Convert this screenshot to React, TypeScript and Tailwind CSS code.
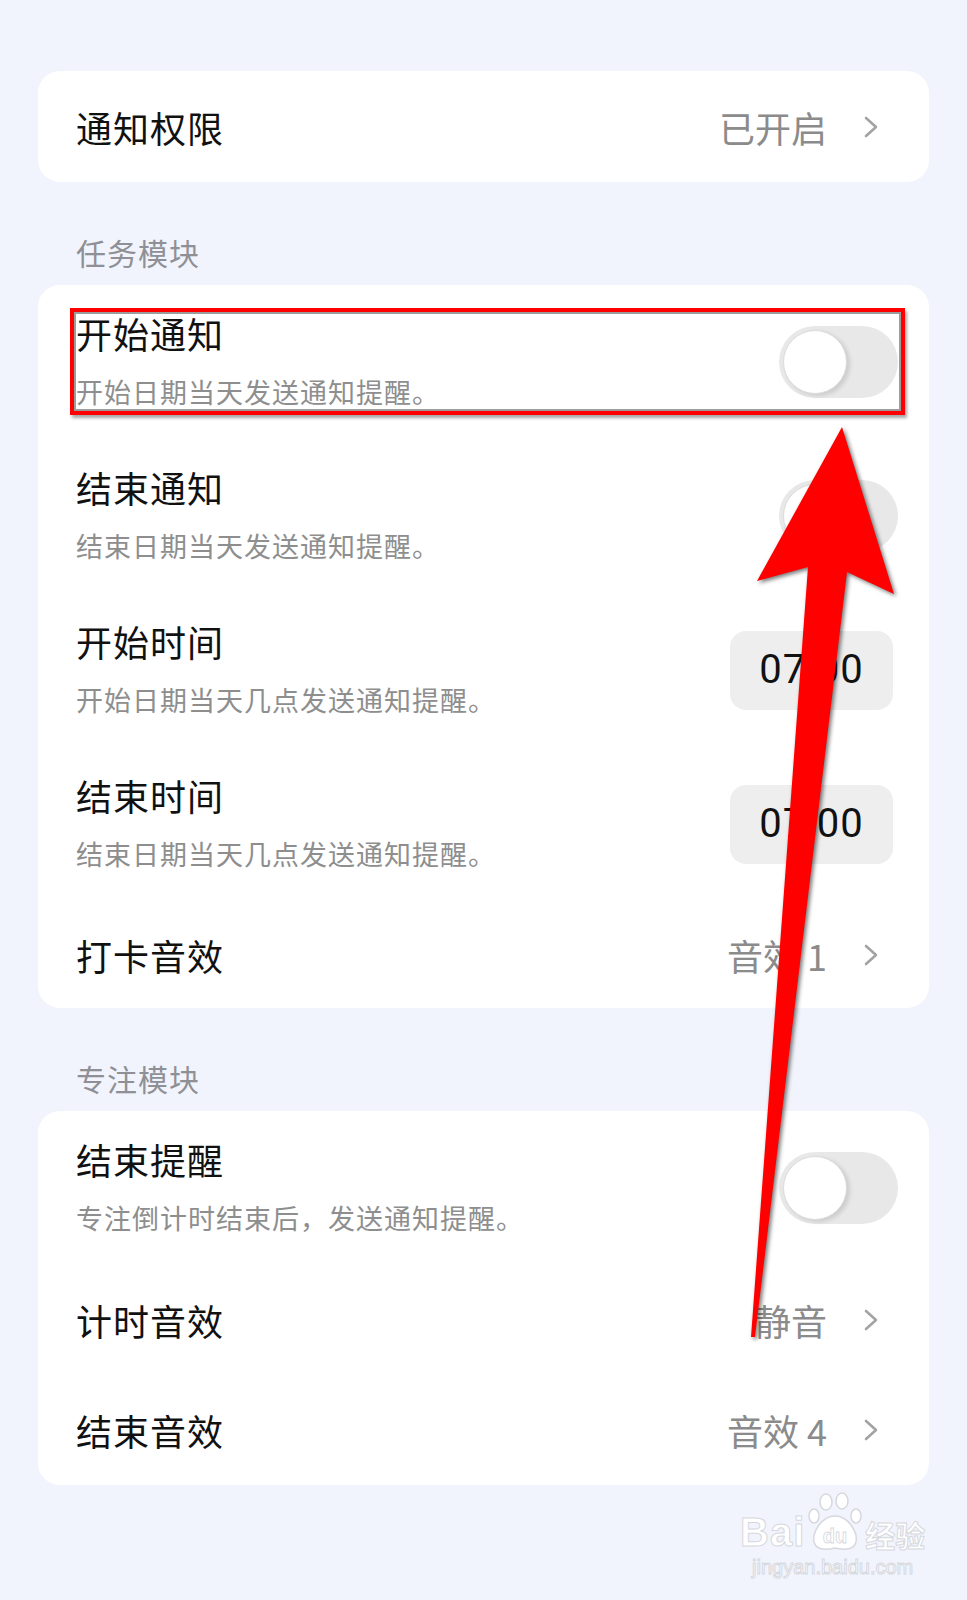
import React from 'react';

const font = { fontFamily: '"Noto Sans CJK SC", "Noto Sans", sans-serif' };

function Chevron() {
  return (
    <svg width="14" height="22" viewBox="0 0 14 22" className="ml-[37px] shrink-0">
      <path d="M2 2 L12 11 L2 20" fill="none" stroke="#a3a3a3" strokeWidth="2.6" strokeLinecap="round" strokeLinejoin="round" />
    </svg>
  );
}

function Toggle() {
  return (
    <div className="w-[119px] h-[72px] rounded-full bg-[#e8e8e8] flex items-center pl-[4px] mr-[31px] shrink-0">
      <div className="w-[64px] h-[64px] rounded-full bg-white border border-[#dcdcdc] shadow-[3px_2px_4px_rgba(0,0,0,0.12)]"></div>
    </div>
  );
}

function TimeBox({ value }: { value: string }) {
  return (
    <div className="w-[163px] h-[79px] rounded-[16px] bg-[#eeeeee] flex items-center justify-center mr-[36px] shrink-0">
      <span className="text-[40px] text-[#111] tracking-[1px]" style={{ fontFamily: 'Roboto, "Noto Sans", sans-serif' }}>{value}</span>
    </div>
  );
}

function TwoLineRow({ title, sub, right }: { title: string; sub: string; right: React.ReactNode }) {
  return (
    <div className="h-[154px] flex items-center justify-between pl-[38px]">
      <div className="flex flex-col pb-[4px]">
        <div className="text-[36px] leading-[44px] text-[#111] tracking-[1px]">{title}</div>
        <div className="mt-[20px] text-[27px] leading-[34px] text-[#8e8e8e] tracking-[1px]">{sub}</div>
      </div>
      {right}
    </div>
  );
}

function LinkRow({ title, value, h = 'h-[110px]' }: { title: string; value: string; h?: string }) {
  return (
    <div className={`${h} flex items-center justify-between pl-[38px] pr-[51px]`}>
      <div className="text-[36px] leading-[44px] text-[#111] tracking-[1px]">{title}</div>
      <div className="flex items-center">
        <span className="text-[36px] leading-[44px] text-[#8b8b8b]">{value}</span>
        <Chevron />
      </div>
    </div>
  );
}

function SectionHeader({ label }: { label: string }) {
  return (
    <div className="pt-[50px] pb-[13px] pl-[38px] text-[30px] leading-[40px] text-[#8f9095] tracking-[1px]">{label}</div>
  );
}

export default function App() {
  return (
    <div className="w-full min-h-[1600px] bg-[#f1f4fc] relative overflow-hidden" style={font}>
      <div className="px-[38px] pt-[71px]">
        {/* 通知权限 */}
        <div className="bg-white rounded-[22px]">
          <LinkRow title="通知权限" value="已开启" h="h-[111px]" />
        </div>

        <SectionHeader label="任务模块" />
        <div className="bg-white rounded-[22px]">
          <TwoLineRow title="开始通知" sub="开始日期当天发送通知提醒。" right={<Toggle />} />
          <TwoLineRow title="结束通知" sub="结束日期当天发送通知提醒。" right={<Toggle />} />
          <TwoLineRow title="开始时间" sub="开始日期当天几点发送通知提醒。" right={<TimeBox value="07:00" />} />
          <TwoLineRow title="结束时间" sub="结束日期当天几点发送通知提醒。" right={<TimeBox value="07:00" />} />
          <LinkRow title="打卡音效" value="音效 1" h="h-[107px]" />
        </div>

        <SectionHeader label="专注模块" />
        <div className="bg-white rounded-[22px]">
          <TwoLineRow title="结束提醒" sub="专注倒计时结束后，发送通知提醒。" right={<Toggle />} />
          <LinkRow title="计时音效" value="静音" />
          <LinkRow title="结束音效" value="音效 4" />
        </div>
      </div>

      {/* Baidu watermark */}
      <div className="absolute left-[740px] top-[1492px] flex flex-col items-center" style={{ fontFamily: '"Liberation Sans", sans-serif' }}>
        <div className="flex items-end">
          <span className="text-[40px] leading-[40px] font-bold text-white [-webkit-text-stroke:1px_#d6d8de] tracking-[1px]">Bai</span>
          <svg width="58" height="60" viewBox="0 0 58 60" className="mx-[1px]">
            <g fill="#ffffff" stroke="#d6d8de" strokeWidth="1.5">
              <ellipse cx="20" cy="10" rx="6" ry="8" />
              <ellipse cx="36" cy="9" rx="6" ry="8" />
              <ellipse cx="8" cy="24" rx="5" ry="7" />
              <ellipse cx="50" cy="24" rx="5" ry="7" />
              <path d="M29 24 C16 24 6 40 8 50 C10 58 20 58 29 56 C38 58 48 58 50 50 C52 40 42 24 29 24 Z" />
            </g>
            <text x="29" y="51" textAnchor="middle" fontSize="20" fontWeight="bold" fill="#ffffff" stroke="#d6d8de" strokeWidth="0.8" fontFamily="Liberation Sans, sans-serif">du</text>
          </svg>
          <span className="text-[30px] leading-[36px] font-bold text-white [-webkit-text-stroke:1px_#d6d8de]" style={{ fontFamily: '"Noto Sans CJK SC", sans-serif' }}>经验</span>
        </div>
        <div className="text-[20px] leading-[22px] text-white [-webkit-text-stroke:1px_#d6d8de] mt-[4px]">jingyan.baidu.com</div>
      </div>

      {/* red annotation box */}
      <div className="absolute left-[70px] top-[308px] w-[835px] h-[107px] border-4 border-[#ff0000] shadow-[inset_0_0_0_2px_#9c9c9c,2px_3px_3px_rgba(0,0,0,0.35)]"></div>

      {/* red arrow */}
      <svg className="absolute left-0 top-0 pointer-events-none" width="967" height="1600" viewBox="0 0 967 1600" style={{ filter: 'drop-shadow(2px 2px 2px rgba(0,0,0,0.55))' }}>
        <polygon points="842,427 894,594 847,572 755,1337 751,1337 808,567 757,581" fill="#ff0000" />
      </svg>
    </div>
  );
}
